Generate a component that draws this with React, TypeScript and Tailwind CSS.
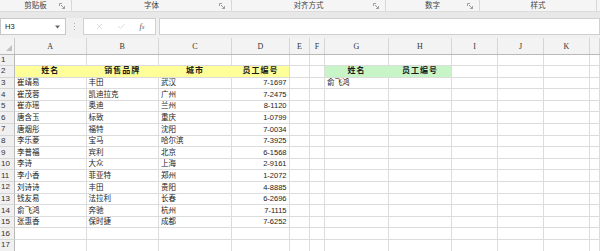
import { X, Check } from "lucide-react";

const GRID =
  "grid grid-cols-[15px_71.5px_72.5px_73px_58px_20px_15px_64px_63px_46px_46px_46px_1fr]";

const FONT = { fontFamily: '"Liberation Sans", "Noto Sans CJK SC", sans-serif' };

type Cell = { t?: string; kind?: "yh" | "yhl" | "gh" | "ghl" | "num" };

const people = [
  ["崔靖易", "丰田", "武汉", "7-1697"],
  ["崔茂蓉", "凯迪拉克", "广州", "7-2475"],
  ["崔亦瑶", "奥迪", "兰州", "8-1120"],
  ["唐含玉", "标致", "重庆", "1-0799"],
  ["唐烟彤", "福特", "沈阳", "7-0034"],
  ["李乐菱", "宝马", "哈尔滨", "7-3925"],
  ["李普福", "宾利", "北京", "6-1568"],
  ["李诗", "大众", "上海", "2-9161"],
  ["李小香", "菲亚特", "郑州", "1-2072"],
  ["刘诗诗", "丰田", "贵阳", "4-8885"],
  ["钱友易", "法拉利", "长春", "6-2696"],
  ["俞飞鸿", "奔驰", "杭州", "7-1115"],
  ["张惠香", "保时捷", "成都", "7-6252"],
];

const buildRows = (): Cell[][] => {
  const rows: Cell[][] = [];
  for (let r = 1; r <= 17; r++) {
    const row: Cell[] = Array.from({ length: 12 }, () => ({}));
    if (r === 2) {
      row[0] = { t: "姓名", kind: "yh" };
      row[1] = { t: "销售品牌", kind: "yh" };
      row[2] = { t: "城市", kind: "yh" };
      row[3] = { t: "员工编号", kind: "yhl" };
      row[6] = { t: "姓名", kind: "gh" };
      row[7] = { t: "员工编号", kind: "ghl" };
    }
    const p = people[r - 3];
    if (p) {
      row[0] = { t: p[0] };
      row[1] = { t: p[1] };
      row[2] = { t: p[2] };
      row[3] = { t: p[3], kind: "num" };
    }
    if (r === 3) row[6] = { t: "俞飞鸿" };
    rows.push(row);
  }
  return rows;
};

const cellClass = (c: Cell) => {
  switch (c.kind) {
    case "yh":
      return "bg-[#ffff99] border-r-[#ffff99] justify-center font-bold text-[8px] tracking-[1px]";
    case "yhl":
      return "bg-[#ffff99] justify-center font-bold text-[8px] tracking-[1px]";
    case "gh":
      return "bg-[#c8f5c8] border-r-[#c8f5c8] justify-center font-bold text-[8px] tracking-[1px]";
    case "ghl":
      return "bg-[#c8f5c8] justify-center font-bold text-[8px] tracking-[1px]";
    case "num":
      return "justify-end pr-[2.5px] text-[7.5px]";
    default:
      return "pl-[2px] text-[7.5px]";
  }
};

const Launcher = () => (
  <svg width="6" height="6" viewBox="0 0 6 6" className="text-[#8a8a8a]">
    <path d="M0.5 3V0.5H3" fill="none" stroke="currentColor" strokeWidth="0.8" />
    <path d="M2 2L5.5 5.5M5.5 3V5.5H3" fill="none" stroke="currentColor" strokeWidth="0.8" />
  </svg>
);

const groups = [
  { name: "剪贴板", w: "w-[72px]" },
  { name: "字体", w: "w-[160px]" },
  { name: "对齐方式", w: "w-[154px]" },
  { name: "数字", w: "w-[94px]" },
  { name: "样式", w: "w-[117px]", noLauncher: true },
];

const App = () => {
  const rows = buildRows();
  const letters = ["A", "B", "C", "D", "E", "F", "G", "H", "I", "J", "K", ""];

  return (
    <div className="w-[600px] h-[251px] overflow-hidden bg-white text-[#1a1a1a]" style={FONT}>
      {/* Ribbon group labels */}
      <div className="flex h-[11px] bg-[#f5f5f5] text-[7.5px] text-[#444]">
        {groups.map((g) => (
          <div
            key={g.name}
            className={`${g.w} relative flex items-center justify-center border-r border-[#d8d8d8]`}
          >
            <span>{g.name}</span>
            {!g.noLauncher && (
              <span className="absolute right-[6px] top-[3px] flex">
                <Launcher />
              </span>
            )}
          </div>
        ))}
      </div>
      <div className="h-[7px] bg-[#e8e8e8] border-t border-[#dcdcdc]" />

      {/* Formula bar */}
      <div className="flex h-[17px] bg-[#f0f0f0] text-[7.5px]">
        <div className="w-[66px] bg-white border border-[#c8c8c8] flex items-center justify-between pl-[4px] pr-[5px]">
          <span>H3</span>
          <svg width="5" height="4" viewBox="0 0 5 4">
            <path d="M0 0.5H5L2.5 3.5Z" fill="#666" />
          </svg>
        </div>
        <div className="w-[17px] flex items-center justify-center">
          <div className="flex flex-col gap-[1.5px]">
            <span className="w-[1.5px] h-[1.5px] bg-[#b0b0b0]" />
            <span className="w-[1.5px] h-[1.5px] bg-[#b0b0b0]" />
            <span className="w-[1.5px] h-[1.5px] bg-[#b0b0b0]" />
          </div>
        </div>
        <div className="w-[73px] bg-white border border-[#d0d0d0] flex items-center justify-around px-[4px]">
          <X size={9} strokeWidth={1.2} className="text-[#b5b5b5]" />
          <Check size={9} strokeWidth={1.2} className="text-[#b5b5b5]" />
          <span className="italic text-[8px] text-[#555]" style={{ fontFamily: '"Liberation Serif", serif' }}>
            f<span className="text-[6px]">x</span>
          </span>
        </div>
        <div className="w-[3px]" />
        <div className="flex-1 bg-white border border-[#d0d0d0]" />
      </div>
      <div className="h-[3px] bg-[#f0f0f0]" />

      {/* Column headers */}
      <div className={`${GRID} h-[16.5px] bg-[#f3f3f3] border-b border-[#b9b9b9]`}>
        <div className="relative border-r border-[#c9c9c9]">
          <svg width="6" height="6" viewBox="0 0 6 6" className="absolute right-[2px] bottom-[3px]">
            <path d="M6 0V6H0Z" fill="#c0c0c0" />
          </svg>
        </div>
        {letters.map((l, i) => (
          <div
            key={i}
            className="flex items-end justify-center pb-[1px] border-r border-[#d6d6d6] text-[8px] text-[#333]"
            style={{ fontFamily: '"Liberation Serif", serif' }}
          >
            {l}
          </div>
        ))}
      </div>

      {/* Sheet rows */}
      {rows.map((row, ri) => (
        <div key={ri} className={`${GRID} h-[11.6px]`}>
          <div className="flex items-center pl-[1px] bg-[#f0f0f0] border-r border-b border-r-[#b9b9b9] border-b-[#d6d6d6] text-[8px] text-[#333] leading-none">
            {ri + 1}
          </div>
          {row.map((c, ci) => (
            <div
              key={ci}
              className={`flex items-center overflow-hidden whitespace-nowrap leading-none border-r border-b border-[#dcdcdc] ${cellClass(c)}`}
            >
              {c.t}
            </div>
          ))}
        </div>
      ))}
    </div>
  );
};

export default App;
